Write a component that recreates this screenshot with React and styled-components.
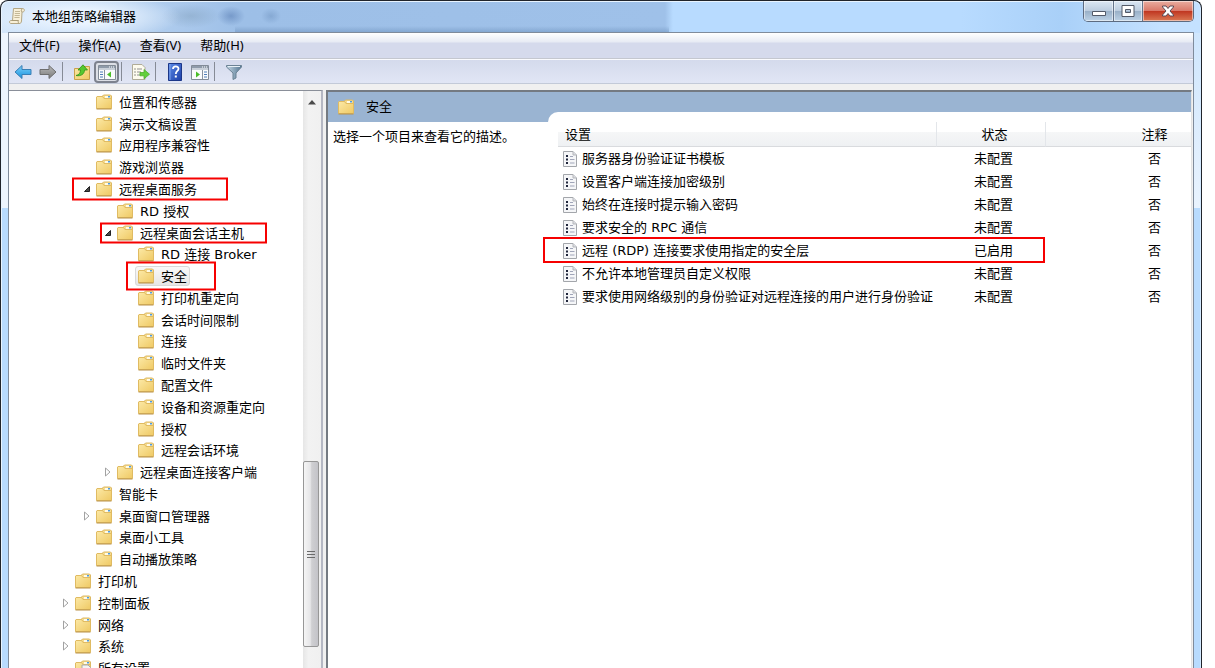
import React from "react";
import styled, { createGlobalStyle, css } from "styled-components";

const treeItems = [
  { name: "位置和传感器", level: 1 },
  { name: "演示文稿设置", level: 1 },
  { name: "应用程序兼容性", level: 1 },
  { name: "游戏浏览器", level: 1 },
  { name: "远程桌面服务", level: 1, arrow: "open", mark: { left: 63, width: 156, height: 23 } },
  { name: "RD 授权", level: 2 },
  { name: "远程桌面会话主机", level: 2, arrow: "open", mark: { left: 91, width: 167, height: 21 } },
  { name: "RD 连接 Broker", level: 3 },
  { name: "安全", level: 3, selected: true, mark: { left: 117, width: 90, height: 29 } },
  { name: "打印机重定向", level: 3 },
  { name: "会话时间限制", level: 3 },
  { name: "连接", level: 3 },
  { name: "临时文件夹", level: 3 },
  { name: "配置文件", level: 3 },
  { name: "设备和资源重定向", level: 3 },
  { name: "授权", level: 3 },
  { name: "远程会话环境", level: 3 },
  { name: "远程桌面连接客户端", level: 2, arrow: "closed" },
  { name: "智能卡", level: 1 },
  { name: "桌面窗口管理器", level: 1, arrow: "closed" },
  { name: "桌面小工具", level: 1 },
  { name: "自动播放策略", level: 1 },
  { name: "打印机", level: 0 },
  { name: "控制面板", level: 0, arrow: "closed" },
  { name: "网络", level: 0, arrow: "closed" },
  { name: "系统", level: 0, arrow: "closed" },
  { name: "所有设置", level: 0, all: true },
];

const policies = [
  { name: "服务器身份验证证书模板", state: "未配置" },
  { name: "设置客户端连接加密级别", state: "未配置" },
  { name: "始终在连接时提示输入密码", state: "未配置" },
  { name: "要求安全的 RPC 通信", state: "未配置" },
  { name: "远程 (RDP) 连接要求使用指定的安全层", state: "已启用", marked: true },
  { name: "不允许本地管理员自定义权限", state: "未配置" },
  { name: "要求使用网络级别的身份验证对远程连接的用户进行身份验证", state: "未配置" },
];

// gradients shared by all of the icons
const IconDefs = () => (
  <Defs aria-hidden="true">
    <defs>
      <linearGradient id="folder" x1="0" y1="0" x2="1" y2="1">
        <stop offset="0" stopColor="#fce9a6" />
        <stop offset="1" stopColor="#efc964" />
      </linearGradient>
      <linearGradient id="blueArrow" x1="0" y1="0" x2="0" y2="1">
        <stop offset="0" stopColor="#7fd2fb" />
        <stop offset="1" stopColor="#1590dd" />
      </linearGradient>
      <linearGradient id="greyArrow" x1="0" y1="0" x2="0" y2="1">
        <stop offset="0" stopColor="#b9b9b9" />
        <stop offset="1" stopColor="#7b7b7b" />
      </linearGradient>
      <linearGradient id="help" x1="0" y1="0" x2="1" y2="1">
        <stop offset="0" stopColor="#5b8be8" />
        <stop offset="1" stopColor="#1d3fa8" />
      </linearGradient>
      <linearGradient id="funnel" x1="0" y1="0" x2="1" y2="0">
        <stop offset="0" stopColor="#c4d6e4" />
        <stop offset="1" stopColor="#547792" />
      </linearGradient>
    </defs>
  </Defs>
);

const FolderIcon = ({ all }) => (
  <Icon viewBox="0 0 16 16">
    <path d="M6.500 5V2l1-1h7l1 1v3z" fill="#f6dc8f" stroke="#dcb864" />
    <path d="M9 2h5v2H9z" fill="#fffbe8" />
    <path d="M12 2h2v1.500h-2z" fill="#4c9be0" />
    <path d="M.5 3l.5-.5h5.500L8 4.500h7l.5.5v9.500H.5z" fill="url(#folder)" stroke="#e0bb62" />
    <path d="M.5 15h15" stroke="#b9924a" />
    {all && (
      <g>
        <path d="M7 5h6l2.500 2.500V16H7z" fill="#f4f4f4" stroke="#aaa" />
        <circle cx="12" cy="12" r="3.500" fill="#ddd" stroke="#999" />
      </g>
    )}
  </Icon>
);

const PolicyIcon = () => (
  <Icon viewBox="0 0 16 16">
    <path d="M1.500 .5h9.500l3.500 3.500v11.500h-13z" fill="#f5f6f8" stroke="#a3a6ab" />
    <path d="M11 .5V4h3.500" fill="#dcdee2" stroke="#b4b6bb" />
    <path d="M4 4h2v2H4zM4 7.500h2v2H4zM4 11h2v2H4z" fill="#20263c" />
    <path d="M8 5.500h3M8 8.500h4.500M8 12h4.500" stroke="#a0a5b8" />
  </Icon>
);

const ScrollIcon = () => (
  <Icon viewBox="0 0 16 16">
    <path d="M4.500 .5h9c2.500 0 2.500 3.500 0 3.500H13l-.5 9c-.2 1.800-1 2.500-2 2.500H2c-2 0-2-3 0-3h1.500z" fill="#f8f0d8" stroke="#b3a684" />
    <path d="M6 3.500h5M5.800 5.500h5.200M5.600 7.500h5.200M5.400 9.500h5.200" stroke="#c4b896" />
    <path d="M3 12.500h6.500c-.8 1 0 3 1 3" fill="none" stroke="#a89a76" />
    <path d="M13.500 .8c-1.500.4-1.500 2.500-.5 3.200" fill="none" stroke="#a89a76" />
  </Icon>
);

const ArrowIcon = ({ forward }) => (
  <Icon viewBox="0 0 18 16" $width={18}>
    <path
      d={forward ? "M17 8l-7-6.500v4H1v5h9v4z" : "M1 8l7-6.500v4h9v5H8v4z"}
      fill={forward ? "url(#greyArrow)" : "url(#blueArrow)"}
      stroke={forward ? "#6e6e6e" : "#3a7fb5"}
      strokeLinejoin="round"
    />
  </Icon>
);

const FolderUpIcon = () => (
  <Icon viewBox="0 0 16 16">
    <path d="M.5 4.500h7.500l1.500-2h6v13H.5z" fill="url(#folder)" stroke="#c9a04b" />
    <path d="M2 11.500c3-.5 4.500-2.500 4.500-5.500H4L9 .8 13.500 6H10.500c0 4-3.500 6.500-8.500 5.500z" fill="#56c72f" stroke="#2f9416" strokeWidth=".8" />
  </Icon>
);

const PaneIcon = ({ flip }) => (
  <Icon viewBox="0 0 18 16" $width={18}>
    <path d="M.5 1.500h17v14H.5z" fill="#fafbfc" stroke="#828b97" />
    <path d="M1 2h16v2H1z" fill="#8f9baa" />
    <path d="M1 4h16v2H1z" fill="#c9d0d9" />
    <path d="M11 3h1M13 3h1M15 3h1" stroke="#fff" />
    {flip ? (
      <g>
        <path d="M11.500 6v9" stroke="#8993a1" />
        <path d="M13 8h3M13 10.500h3M13 13h3" stroke="#4d7cb8" />
        <path d="M5 7.500l4 3-4 3z" fill="#4bbd28" />
      </g>
    ) : (
      <g>
        <path d="M6.500 6v9" stroke="#8993a1" />
        <path d="M2 8h3M2 10.500h3M2 13h3" stroke="#4d7cb8" />
        <path d="M13 7.500l-4 3 4 3z" fill="#4bbd28" />
      </g>
    )}
  </Icon>
);

const ExportIcon = () => (
  <Icon viewBox="0 0 18 16" $width={18}>
    <path d="M.5 .5h9.500l3 3v12H.5z" fill="#fdfbee" stroke="#b0ac98" />
    <path d="M2.500 5h1M2.500 8h1M2.500 11h1" stroke="#333" />
    <path d="M5 5h5M5 8h4M5 11h3" stroke="#8f8f8f" />
    <path d="M8 8.500h4V5.500l5.500 4.700-5.500 4.600v-3H8z" fill="#62cf3b" stroke="#4bae2b" strokeWidth=".8" />
  </Icon>
);

const HelpIcon = () => (
  <Icon viewBox="0 0 16 18" $height={18}>
    <path d="M1.500 .5h13v17h-13z" fill="url(#help)" stroke="#1c3788" />
    <path d="M3 1v16" stroke="#7fa4ee" />
    <path d="M6 6c0-3.500 5.500-3.300 5.500-.3C11.500 8 8.800 8 8.800 11" fill="none" stroke="#fff" strokeWidth="1.800" />
    <path d="M7.800 12.500h2v2h-2z" fill="#fff" />
  </Icon>
);

const FilterIcon = () => (
  <Icon viewBox="0 0 16 16">
    <path d="M.5 1.500h15v1.500L10 9v5l-3 1.500V9L.5 3z" fill="url(#funnel)" stroke="#6b8294" />
    <path d="M2 2.500h12" stroke="#e7f0f6" />
  </Icon>
);

const TreeArrow = ({ open }) => (
  <svg width="8" height="10" viewBox="0 0 8 10">
    {open ? (
      <path d="M6.500 2.500v5H1.500z" fill="#4b4b4b" stroke="#222" strokeLinejoin="round" />
    ) : (
      <path d="M1.500 1l4.500 4-4.500 4z" fill="#fff" stroke="#a2a2a2" />
    )}
  </svg>
);

const App = () => {
  return (
    <Window>
      <GlobalStyle />
      <IconDefs />
      <TitleBar>
        <Title>
          <ScrollIcon />
          <h1>本地组策略编辑器</h1>
        </Title>
        <Caption>
          <CaptionButton aria-label="最小化" $width={30}>
            <svg width="14" height="12" viewBox="0 0 14 12">
              <path d="M.5 6.500h13v4H.5z" fill="#fff" stroke="#535a68" />
            </svg>
          </CaptionButton>
          <CaptionButton aria-label="最大化" $width={29}>
            <svg width="14" height="12" viewBox="0 0 14 12">
              <path d="M1 .5h12v11H1zM4.500 4.500v3h5v-3z" fill="#fff" fillRule="evenodd" stroke="#535a68" />
            </svg>
          </CaptionButton>
          <CaptionButton aria-label="关闭" $width={50} $close>
            <svg width="14" height="12" viewBox="0 0 14 12">
              <path d="M1.500 1h3.500l2 2.500L9 1h3.500v1L9 6l3.500 4v1H9L7 8.500 5 11H1.500v-1L5 6 1.500 2z" fill="#fff" stroke="#5c4a55" />
            </svg>
          </CaptionButton>
        </Caption>
      </TitleBar>

      <Client>
        <MenuBar>
          <MenuItem>文件(F)</MenuItem>
          <MenuItem>操作(A)</MenuItem>
          <MenuItem>查看(V)</MenuItem>
          <MenuItem>帮助(H)</MenuItem>
        </MenuBar>
        <Toolbar>
          <ToolButton aria-label="后退"><ArrowIcon /></ToolButton>
          <ToolButton aria-label="前进"><ArrowIcon forward /></ToolButton>
          <Separator />
          <ToolButton aria-label="上一级"><FolderUpIcon /></ToolButton>
          <ToolButton aria-label="显示/隐藏控制台树" $pressed><PaneIcon /></ToolButton>
          <Separator />
          <ToolButton aria-label="导出列表"><ExportIcon /></ToolButton>
          <Separator />
          <ToolButton aria-label="帮助"><HelpIcon /></ToolButton>
          <ToolButton aria-label="显示/隐藏操作窗格"><PaneIcon flip /></ToolButton>
          <Separator />
          <ToolButton aria-label="筛选器"><FilterIcon /></ToolButton>
        </Toolbar>

        <Panes>
          <TreePane>
            <TreeList>
              {treeItems.map((item) => (
                <TreeRow key={item.name} $level={item.level}>
                  <ArrowSlot>
                    {item.arrow && (
                      <ArrowButton aria-label={item.name}>
                        <TreeArrow open={item.arrow === "open"} />
                      </ArrowButton>
                    )}
                  </ArrowSlot>
                  <TreeLabel $selected={item.selected}>
                    <FolderIcon all={item.all} />
                    <TreeText>{item.name}</TreeText>
                  </TreeLabel>
                  {item.mark && <TreeMark $box={item.mark} />}
                </TreeRow>
              ))}
            </TreeList>
            <Scrollbar>
              <ScrollUp aria-label="向上滚动">
                <svg width="8" height="5" viewBox="0 0 8 5">
                  <path d="M4 0l4 4.500H0z" fill="#4a4a4a" />
                </svg>
              </ScrollUp>
              <Thumb>
                <svg width="8" height="9" viewBox="0 0 8 9">
                  <path d="M0 1.500h8M0 4.500h8M0 7.500h8" stroke="#6b6b6b" />
                </svg>
              </Thumb>
            </Scrollbar>
          </TreePane>

          <DetailPane>
            <Banner>
              <FolderIcon />
              <h2>安全</h2>
            </Banner>
            <DetailBody>
              <Description>选择一个项目来查看它的描述。</Description>
              <ListArea>
                <PolicyTable>
                  <thead>
                    <tr>
                      <HeadCell>设置</HeadCell>
                      <HeadCell $kind="state">状态</HeadCell>
                      <HeadCell $kind="comment">注释</HeadCell>
                    </tr>
                  </thead>
                  <tbody>
                    {policies.map((policy) => (
                      <tr key={policy.name}>
                        <Cell>
                          <CellName>
                            <PolicyIcon />
                            {policy.name}
                            {policy.marked && <RowMark />}
                          </CellName>
                        </Cell>
                        <Cell $kind="state">{policy.state}</Cell>
                        <Cell $kind="comment">否</Cell>
                      </tr>
                    ))}
                  </tbody>
                </PolicyTable>
              </ListArea>
            </DetailBody>
          </DetailPane>
        </Panes>
      </Client>
    </Window>
  );
};

const GlobalStyle = createGlobalStyle`
  * {
    box-sizing: border-box;
  }

  body {
    margin: 0;
    background: #fff;
    color: #000;
    font-family: "Noto Sans", "Noto Sans CJK SC", sans-serif;
    font-size: 13px;
    line-height: 20px;
    overflow: hidden;
  }

  h1, h2, p, ul {
    margin: 0;
    padding: 0;
    font-size: 13px;
    font-weight: normal;
  }

  button {
    padding: 0;
    border: 0;
    background: none;
    color: inherit;
    font: inherit;
  }
`;

const Defs = styled.svg`
  position: absolute;
  width: 0;
  height: 0;
`;

const Icon = styled.svg`
  flex: none;
  width: ${({ $width }) => $width || 16}px;
  height: ${({ $height }) => $height || 16}px;
`;

const Window = styled.div`
  display: flex;
  flex-direction: column;
  height: 100vh;
  margin-right: 13px;
  padding: 0 7px;
  border: 1px solid #20242b;
  border-bottom: 0;
  border-radius: 8px 8px 0 0;
  box-shadow: inset 1px 1px 0 #e8f4ff, inset -1px 0 0 #d3e9ff;
  background:
    radial-gradient(ellipse 100px 24px at 80px 16px, #eaf4fffa 30%, #eaf4ff00) no-repeat,
    radial-gradient(ellipse 14px 10px at 230px 15px, #5f83b8a0, #5f83b800) no-repeat,
    radial-gradient(ellipse 30px 12px at 190px 15px, #7e9cb870, #7e9cb800) no-repeat,
    radial-gradient(ellipse 10px 8px at 270px 15px, #6f93c080, #6f93c000) no-repeat,
    linear-gradient(#edf5fe, #edf5fe) 0 32px / 8px 175px no-repeat,
    linear-gradient(#cfe6fd, #e9f3fe) 100% 32px / 8px 175px no-repeat,
    linear-gradient(#6f93be00, #6f93bea0) 234px 25px / 434px 7px no-repeat,
    linear-gradient(90deg, #d3e6fb 0, #9dbfe7 240px, #9fc1e9 664px, #b8dbff 672px, #b8dbff 960px, #a9d0f8 1060px, #c4e1ff 1160px) 0 0 / 100% 32px no-repeat,
    #b8dbfe;
`;

const TitleBar = styled.header`
  display: flex;
  flex: none;
  align-items: flex-start;
  justify-content: space-between;
  height: 31px;
`;

const Title = styled.div`
  display: flex;
  align-items: center;
  gap: 7px;
  height: 30px;
  padding-left: 1px;
`;

const Caption = styled.div`
  display: flex;
  overflow: hidden;
  border: 1px solid #5d6b80;
  border-top: 0;
  border-radius: 0 0 5px 5px;
`;

const CaptionButton = styled.button`
  display: flex;
  align-items: center;
  justify-content: center;
  width: ${({ $width }) => $width}px;
  height: 20px;
  border-right: 1px solid #64748a;
  background: linear-gradient(#dbe7f3, #bccddf 48%, #98afc7 50%, #bdd2e6);
  box-shadow: inset 0 0 0 1px #ffffff80;

  ${({ $close }) =>
    $close &&
    css`
      border-right: 0;
      background: linear-gradient(#e9ada0, #d9796a 48%, #bf3520 50%, #da7954);
    `}
`;

const Client = styled.main`
  display: flex;
  flex: 1;
  flex-direction: column;
  min-height: 0;
  border: 1px solid #7f8b9b;
  border-bottom: 0;
  background: #f0f0f0;
`;

const MenuBar = styled.nav`
  display: flex;
  flex: none;
  align-items: flex-start;
  gap: 1px;
  height: 26px;
  padding: 2px 0 0 1px;
  border-bottom: 1px solid #c4c7cf;
  background: linear-gradient(#fff, #e7ebf4 9px, #d5daec 10px, #d5daec);
`;

const MenuItem = styled.button`
  padding: 0 9px;
`;

const Toolbar = styled.div`
  display: flex;
  flex: none;
  align-items: center;
  height: 25px;
  padding-left: 1px;
  border-top: 1px solid #fafbfe;
  border-bottom: 1px solid #c3cad8;
  background: linear-gradient(#d4daec, #e1e6f5);
`;

const ToolButton = styled.button`
  display: flex;
  align-items: center;
  justify-content: center;
  width: 25px;
  height: 22px;

  ${({ $pressed }) =>
    $pressed &&
    css`
      border: 2px solid #7d828e;
      border-radius: 4px;
      background: #dcdfe6;
    `}
`;

const Separator = styled.span`
  width: 1px;
  height: 19px;
  margin: 0 6px 0 2px;
  background: #868b96;
`;

const Panes = styled.div`
  display: grid;
  flex: 1;
  grid-template-columns: 314px 1fr;
  gap: 3px;
  min-height: 0;
  padding-top: 6px;
  font-family: "DejaVu Sans", "Noto Sans CJK SC", sans-serif;
`;

const TreePane = styled.section`
  display: flex;
  min-height: 0;
  overflow: hidden;
  border-top: 1px solid #8a8f99;
  border-right: 2px solid #b4b7c3;
  background: #fff;
`;

const TreeList = styled.ul`
  display: grid;
  flex: 1;
  grid-auto-rows: 1fr;
  height: 588px;
  list-style: none;
`;

const TreeRow = styled.li`
  position: relative;
  display: flex;
  align-items: center;
  padding-left: ${({ $level }) => 51 + $level * 21}px;
`;

const ArrowSlot = styled.span`
  display: flex;
  justify-content: center;
  width: 12px;
`;

const ArrowButton = styled.button`
  display: flex;
`;

const TreeLabel = styled.div`
  display: flex;
  align-items: center;
  gap: 7px;
  height: 20px;
  padding: 0 2px;
  border: 1px solid transparent;
  border-radius: 3px;

  ${({ $selected }) =>
    $selected &&
    css`
      border-color: #d9d9d9;
      background: linear-gradient(#f9f9f9, #e6e6e6);
    `}
`;

const TreeText = styled.span`
  padding-top: 2px;
`;

const markStyle = css`
  position: absolute;
  z-index: 1;
  border: 2px solid #f60000;
  pointer-events: none;
`;

const TreeMark = styled.span`
  ${markStyle}
  top: 50%;
  left: ${({ $box }) => $box.left}px;
  width: ${({ $box }) => $box.width}px;
  height: ${({ $box }) => $box.height}px;
  transform: translateY(-50%);
`;

const Scrollbar = styled.div`
  display: flex;
  flex-direction: column;
  justify-content: space-between;
  width: 18px;
  padding-bottom: 21px;
  background: linear-gradient(90deg, #e6e6e6, #f2f2f2 30%, #f0f0f0);
`;

const ScrollUp = styled.button`
  display: flex;
  align-items: center;
  justify-content: center;
  height: 22px;
`;

const Thumb = styled.div`
  display: flex;
  align-items: center;
  justify-content: center;
  width: 16px;
  height: 186px;
  border: 1px solid #979797;
  border-radius: 2px;
  background: linear-gradient(90deg, #f5f5f5, #e6e6e8 45%, #cfcfd2 55%, #c3c3c8);
`;

const DetailPane = styled.section`
  display: flex;
  flex-direction: column;
  min-width: 0;
  margin-right: 1px;
  border: 2px solid #747a82;
  border-right: 1px solid #e3e3e3;
  border-bottom: 0;
  background: #fff;
`;

const Banner = styled.div`
  display: flex;
  flex: none;
  align-items: center;
  gap: 12px;
  height: 30px;
  padding-left: 10px;
  background: #9ab4d2;
`;

const DetailBody = styled.div`
  display: grid;
  grid-template-columns: 220px 1fr;
`;

const Description = styled.p`
  padding: 5px;
`;

const ListArea = styled.div`
  margin-top: -10px;
  padding: 10px 0 0 10px;
  border-top-left-radius: 10px;
  background: #fff;
`;

const PolicyTable = styled.table`
  width: 100%;
  border-collapse: separate;
  border-spacing: 0;
  table-layout: fixed;
`;

const columns = {
  state: css`
    width: 109px;
    text-align: center;
  `,
  comment: css`
    width: 145px;
    padding-left: 72px;
    text-align: center;
  `,
};

const HeadCell = styled.th`
  height: 25px;
  padding: 2px 0 0 7px;
  border-right: 1px solid #e3e6ea;
  border-bottom: 1px solid #d9dbde;
  background: linear-gradient(#fff 40%, #f5f6f7 44%, #eff1f3);
  font-weight: normal;
  text-align: left;
  ${({ $kind }) => columns[$kind]}

  &:last-child {
    border-right: 0;
  }
`;

const Cell = styled.td`
  height: 23px;
  padding: 0 0 0 4px;
  white-space: nowrap;
  ${({ $kind }) => columns[$kind]}
`;

const CellName = styled.div`
  position: relative;
  display: flex;
  align-items: center;
  gap: 4px;
`;

const RowMark = styled.span`
  ${markStyle}
  top: -4px;
  right: -108px;
  bottom: -2px;
  left: -19px;
`;

export default App;
